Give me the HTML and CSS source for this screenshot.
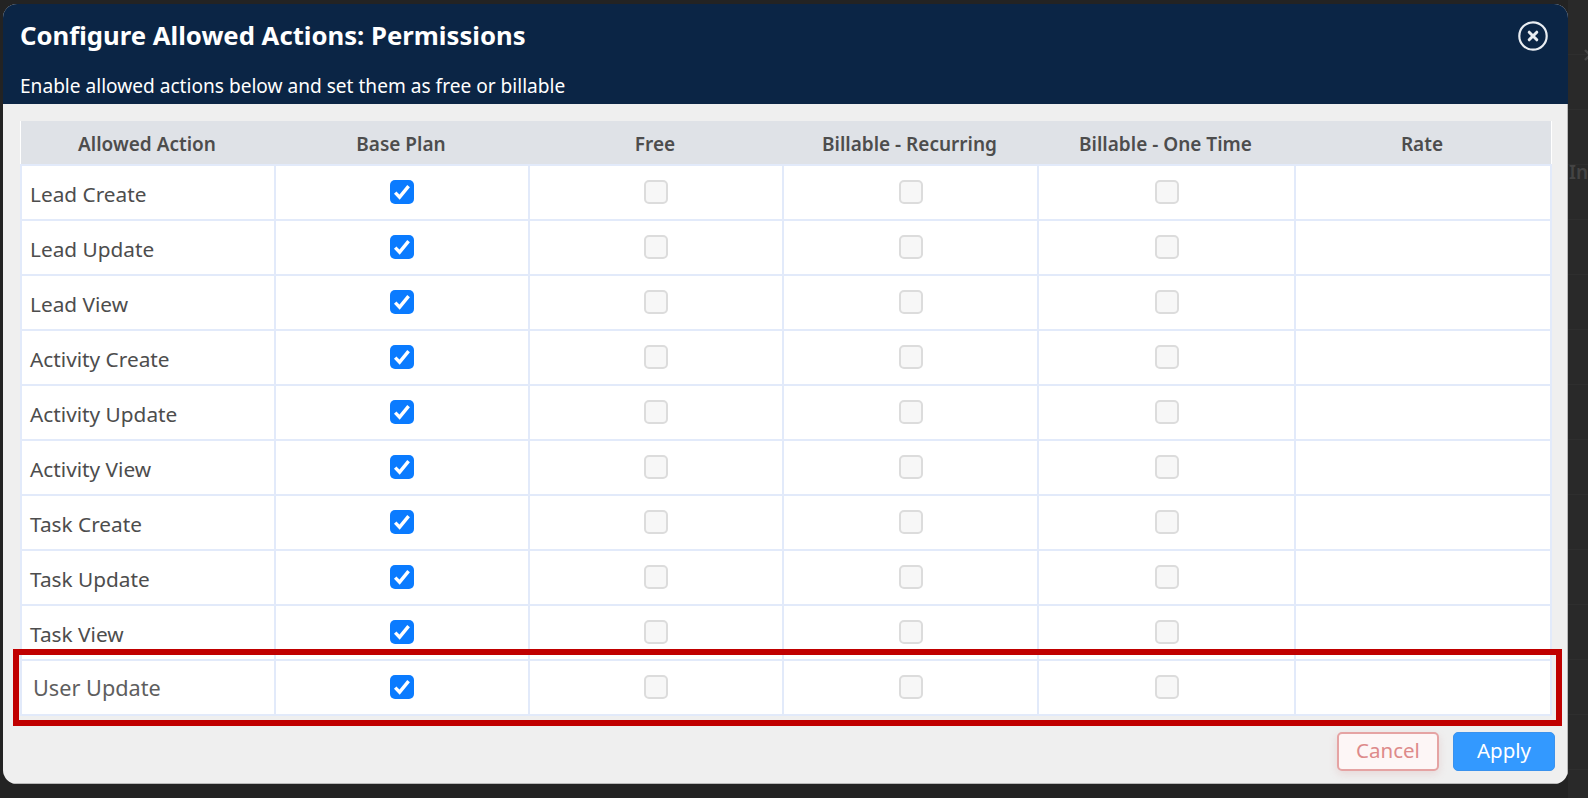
FILE: index.html
```html
<!DOCTYPE html>
<html lang="en">
<head>
<meta charset="utf-8">
<title>Configure Allowed Actions: Permissions</title>
<link rel="stylesheet" href="styles.css">
</head>
<body>
<div class="behind" aria-hidden="true">
  <svg class="behind-x" width="12" height="14" viewBox="0 0 12 14" fill="none" stroke="#444" stroke-width="2.4">
    <path d="M1 2l10 10M11 2L1 12"/>
  </svg>
  <span class="behind-in">In</span>
</div>
<div class="modal">
  <header class="modal-head">
    <h1>Configure Allowed Actions: Permissions</h1>
    <p>Enable allowed actions below and set them as free or billable</p>
    <svg class="close" width="32" height="32" viewBox="0 0 32 32" fill="none" stroke="#e9edf2">
      <circle cx="16" cy="16" r="13.7" stroke-width="2.2"/>
      <path d="M12.2 12.2l7.6 7.6M19.8 12.2l-7.6 7.6" stroke-width="3" stroke-linecap="round"/>
    </svg>
  </header>
  <div class="modal-body">
    <table class="grid">
      <colgroup>
        <col class="c1"><col class="c2"><col class="c3"><col class="c4"><col class="c5"><col class="c6">
      </colgroup>
      <thead>
        <tr><th>Allowed Action</th><th>Base Plan</th><th>Free</th><th>Billable - Recurring</th><th>Billable - One Time</th><th>Rate</th></tr>
      </thead>
      <tbody>
        <tr><td class="name">Lead Create</td><td><span class="cb on"></span></td><td><span class="cb"></span></td><td><span class="cb"></span></td><td><span class="cb"></span></td><td></td></tr>
        <tr><td class="name">Lead Update</td><td><span class="cb on"></span></td><td><span class="cb"></span></td><td><span class="cb"></span></td><td><span class="cb"></span></td><td></td></tr>
        <tr><td class="name">Lead View</td><td><span class="cb on"></span></td><td><span class="cb"></span></td><td><span class="cb"></span></td><td><span class="cb"></span></td><td></td></tr>
        <tr><td class="name">Activity Create</td><td><span class="cb on"></span></td><td><span class="cb"></span></td><td><span class="cb"></span></td><td><span class="cb"></span></td><td></td></tr>
        <tr><td class="name">Activity Update</td><td><span class="cb on"></span></td><td><span class="cb"></span></td><td><span class="cb"></span></td><td><span class="cb"></span></td><td></td></tr>
        <tr><td class="name">Activity View</td><td><span class="cb on"></span></td><td><span class="cb"></span></td><td><span class="cb"></span></td><td><span class="cb"></span></td><td></td></tr>
        <tr><td class="name">Task Create</td><td><span class="cb on"></span></td><td><span class="cb"></span></td><td><span class="cb"></span></td><td><span class="cb"></span></td><td></td></tr>
        <tr><td class="name">Task Update</td><td><span class="cb on"></span></td><td><span class="cb"></span></td><td><span class="cb"></span></td><td><span class="cb"></span></td><td></td></tr>
        <tr><td class="name">Task View</td><td><span class="cb on"></span></td><td><span class="cb"></span></td><td><span class="cb"></span></td><td><span class="cb"></span></td><td></td></tr>
        <tr><td class="name pasted">User Update</td><td><span class="cb on"></span></td><td><span class="cb"></span></td><td><span class="cb"></span></td><td><span class="cb"></span></td><td></td></tr>
      </tbody>
    </table>
    <footer class="actions">
      <button class="btn cancel">Cancel</button>
      <button class="btn apply">Apply</button>
    </footer>
  </div>
  <div class="highlight"></div>
</div>
</body>
</html>
```
FILE: styles.css
```css
* { box-sizing: border-box; }
html, body { margin: 0; height: 100%; }
body {
  background: #232323;
  font-family: "Noto Sans", "Open Sans", sans-serif;
  padding: 4px 20px 14px 3px;
  overflow: hidden;
}
.behind {
  position: absolute;
  top: 0;
  right: 0;
  width: 20px;
  height: 798px;
  overflow: hidden;
  background: repeating-linear-gradient(#292929 0, #292929 54px, #2e2e2e 54px, #2e2e2e 55px);
  color: #444;
}
.behind-x {
  position: absolute;
  left: 16px;
  top: 48px;
}
.behind-in {
  position: absolute;
  left: 1px;
  top: 159px;
  font-size: 19px;
  font-weight: 600;
}
.modal {
  position: relative;
  height: 780px;
  border-radius: 14px;
  overflow: hidden;
  background: #efefef;
  display: flex;
  flex-direction: column;
}
.modal-head {
  position: relative;
  height: 100px;
  flex: none;
  background: #0b2545;
  color: #fff;
  padding: 0 17px;
}
.modal-head h1 {
  margin: 0;
  padding-top: 13px;
  font-size: 25.7px;
  line-height: 37px;
  font-weight: 700;
}
.modal-head p {
  margin: 0;
  padding-top: 19px;
  font-size: 19.1px;
  line-height: 26px;
}
.close {
  position: absolute;
  top: 16px;
  right: 19px;
}
.modal-body {
  flex: 1;
  padding: 17px 13px 0 17px;
  display: flex;
  flex-direction: column;
  box-shadow: inset -1px -1px 0 #b8b8b8;
}
.grid {
  width: 1530px;
  border-collapse: collapse;
  table-layout: fixed;
  background: #fff;
  color: #4d4d4d;
}
.c1 { width: 254px; }
.c2 { width: 254px; }
.c3 { width: 254px; }
.c4 { width: 255px; }
.c5 { width: 257px; }
.c6 { width: 256px; }
.grid th {
  height: 44px;
  background: #dfe2e7;
  font-size: 19px;
  font-weight: 600;
  padding: 3px 2px 0 0;
  border: 0;
}
.grid td {
  height: 55px;
  padding: 0;
  border: 2px solid #e2eafa;
  text-align: center;
  font-size: 20.8px;
}
.grid td.name {
  text-align: left;
  padding: 2px 0 0 8px;
}
.grid td.pasted {
  padding: 0 0 0 11px;
  font-size: 21.7px;
  color: #5e5e5e;
}
.cb {
  display: block;
  width: 24px;
  height: 24px;
  margin: -2px auto 0;
  border: 2px solid #dcdcdc;
  border-radius: 5px;
  background: #f7f7f7;
}
.cb.on {
  border: 0;
  background-color: #0a7bff;
  background-image: url("data:image/svg+xml;utf8,<svg xmlns='http://www.w3.org/2000/svg' viewBox='0 0 24 24'><path d='M5.2 12.6l4.4 4.6 9-11' fill='none' stroke='white' stroke-width='3.4'/></svg>");
}
.actions {
  display: flex;
  justify-content: flex-end;
  gap: 14px;
  padding: 16px 0 0;
}
.btn {
  width: 102px;
  height: 39px;
  border-radius: 5px;
  font-family: inherit;
  font-size: 20.5px;
  padding: 0 0 4px;
}
.cancel {
  background: #fdf6f6;
  border: 2px solid #e5a3a3;
  color: #dd8a8a;
  box-shadow: 0 3px 8px rgba(200, 120, 120, .2);
}
.apply {
  background: #3399ff;
  border: 1px solid #3a92ee;
  color: #fff;
}
.highlight {
  position: absolute;
  left: 10px;
  top: 645px;
  width: 1549px;
  height: 77px;
  border: 6px solid #c00000;
  pointer-events: none;
}
```
